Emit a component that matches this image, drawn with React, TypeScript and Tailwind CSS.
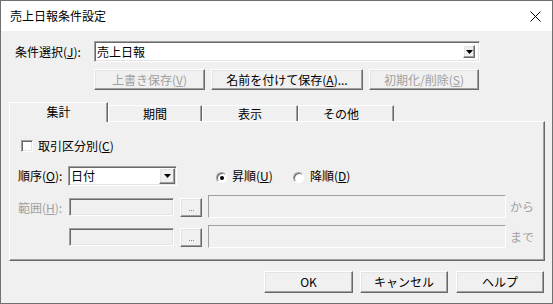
import React from 'react';

// classic win32 3D edges
const raised =
  'border border-t-white border-l-white border-r-[#696969] border-b-[#696969] shadow-[inset_-1px_-1px_0_#a0a0a0,inset_1px_1px_0_#e3e3e3] bg-[#f0f0f0]';
const sunken =
  'border border-t-[#a0a0a0] border-l-[#a0a0a0] border-r-white border-b-white shadow-[inset_1px_1px_0_#696969,inset_-1px_-1px_0_#e3e3e3]';

const Arrow = () => (
  <svg width="7" height="4" viewBox="0 0 7 4">
    <path d="M0 0h7L3.5 4z" fill="#000" />
  </svg>
);

interface BtnProps {
  className: string;
  disabled?: boolean;
  children: React.ReactNode;
}

const Btn: React.FC<BtnProps> = ({ className, disabled, children }) => (
  <div
    className={`${raised} ${className} flex items-center justify-center shrink-0 ${
      disabled ? 'text-[#a0a0a0]' : 'text-black'
    }`}
  >
    {children}
  </div>
);

const Radio = ({ checked }: { checked?: boolean }) => (
  <div className="w-[11px] h-[11px] rounded-full border border-t-[#a0a0a0] border-l-[#a0a0a0] border-r-white border-b-white bg-white shadow-[inset_1px_1px_0_#696969] flex items-center justify-center shrink-0">
    {checked && <div className="w-[4px] h-[4px] rounded-full bg-black" />}
  </div>
);

const DotsBtn = () => (
  <Btn className="w-[22px] h-[19px] mt-[4px] ml-[6px]">
    <div className="flex gap-[1px] mt-[5px]">
      <div className="w-[1px] h-[1px] bg-[#8a8a8a]" />
      <div className="w-[1px] h-[1px] bg-[#8a8a8a]" />
      <div className="w-[1px] h-[1px] bg-[#8a8a8a]" />
    </div>
  </Btn>
);

export default function App() {
  return (
    <div className="w-[553px] h-[304px] border border-[#707070] bg-[#f0f0f0] flex flex-col text-[12px] leading-[14px] text-black font-['Noto_Sans_CJK_JP','Noto_Sans',sans-serif] overflow-hidden">
      {/* Title bar */}
      <div className="h-[30px] bg-white flex items-center justify-between pl-[9px] pr-[11px] shrink-0">
        <span>売上日報条件設定</span>
        <svg width="11" height="11" viewBox="0 0 11 11">
          <path d="M0.5 0.5l10 10M10.5 0.5l-10 10" stroke="#000" strokeWidth="1" />
        </svg>
      </div>

      {/* 条件選択 */}
      <div className="flex items-center h-[21px] mt-[10px] shrink-0">
        <span className="w-[93px] pl-[14px] shrink-0">
          条件選択(<u>J</u>):
        </span>
        <div className={`${sunken} w-[386px] h-full bg-white flex items-center justify-between`}>
          <span className="pl-[2px]">売上日報</span>
          <div className={`${raised} w-[12px] h-[13px] mr-[4px] flex items-center justify-center`}>
            <Arrow />
          </div>
        </div>
      </div>

      {/* Save buttons */}
      <div className="flex h-[21px] mt-[7px] ml-[93px] shrink-0">
        <Btn className="w-[111px] h-full" disabled>
          上書き保存(<u>V</u>)
        </Btn>
        <Btn className="w-[152px] h-full ml-[6px]">
          名前を付けて保存(<u>A</u>)...
        </Btn>
        <Btn className="w-[110px] h-full ml-[6px]" disabled>
          初期化/削除(<u>S</u>)
        </Btn>
      </div>

      {/* Tabs */}
      <div className="flex items-end h-[19px] mt-[12px] ml-[8px] shrink-0">
        <div className="relative z-10 -mb-px w-[99px] h-[20px] bg-[#f0f0f0] border-t border-l border-r border-t-white border-l-white border-r-[#696969] shadow-[inset_-1px_0_0_#a0a0a0] flex items-center justify-center pb-[2px]">
          集計
        </div>
        <div className="w-[94px] h-[16px] border-t border-l border-r border-t-white border-l-white border-r-[#696969] shadow-[inset_-1px_0_0_#a0a0a0] flex items-center justify-center">
          期間
        </div>
        <div className="w-[96px] h-[16px] border-t border-l border-r border-t-white border-l-white border-r-[#696969] shadow-[inset_-1px_0_0_#a0a0a0] flex items-center justify-center">
          表示
        </div>
        <div className="w-[96px] h-[16px] border-t border-l border-r border-t-white border-l-white border-r-[#696969] shadow-[inset_-1px_0_0_#a0a0a0] flex items-center pl-[24px]">
          その他
        </div>
      </div>

      {/* Tab panel */}
      <div className="ml-[8px] w-[536px] h-[140px] border border-t-white border-l-white border-r-[#696969] border-b-[#696969] shadow-[inset_-1px_-1px_0_#a0a0a0] flex flex-col shrink-0">
        {/* 取引区分別 */}
        <div className="flex items-center h-[12px] mt-[18px] pl-[11px]">
          <div className={`${sunken} w-[12px] h-[12px] bg-white shrink-0`} />
          <span className="ml-[5px]">
            取引区分別(<u>C</u>)
          </span>
        </div>

        {/* 順序 */}
        <div className="flex items-center h-[20px] mt-[14px] pl-[8px]">
          <span className="w-[50px] shrink-0">
            順序(<u>O</u>):
          </span>
          <div className={`${sunken} w-[109px] h-full bg-white flex items-center justify-between p-[1px]`}>
            <span className="pl-[1px]">日付</span>
            <div className={`${raised} w-[16px] h-[16px] flex items-center justify-center`}>
              <Arrow />
            </div>
          </div>
          <div className="ml-[39px] mt-[3px]">
            <Radio checked />
          </div>
          <span className="ml-[5px] w-[61px]">
            昇順(<u>U</u>)
          </span>
          <div className="mt-[3px]">
            <Radio />
          </div>
          <span className="ml-[6px]">
            降順(<u>D</u>)
          </span>
        </div>

        {/* 範囲 from */}
        <div className="flex items-start h-[24px] mt-[8px] pl-[8px]">
          <span className="w-[51px] h-[23px] mt-[2px] flex items-center text-[#a0a0a0] shrink-0">
            範囲(<u>H</u>):
          </span>
          <div className={`${sunken} w-[105px] h-[18px] mt-[4px] bg-[#f0f0f0] shrink-0`} />
          <DotsBtn />
          <div className="w-[298px] h-[23px] mt-[1px] ml-[6px] border border-t-[#a0a0a0] border-l-[#a0a0a0] border-r-white border-b-white shrink-0" />
          <span className="h-[23px] mt-[1px] ml-[4px] flex items-center text-[#a0a0a0]">から</span>
        </div>

        {/* 範囲 to */}
        <div className="flex items-start h-[24px] mt-[6px] pl-[8px]">
          <span className="w-[51px] shrink-0" />
          <div className={`${sunken} w-[105px] h-[18px] mt-[4px] bg-[#f0f0f0] shrink-0`} />
          <DotsBtn />
          <div className="w-[298px] h-[23px] mt-[1px] ml-[6px] border border-t-[#a0a0a0] border-l-[#a0a0a0] border-r-white border-b-white shrink-0" />
          <span className="h-[23px] mt-[1px] ml-[4px] flex items-center text-[#a0a0a0]">まで</span>
        </div>
      </div>

      {/* Footer */}
      <div className="flex h-[22px] mt-[10px] ml-[263px] shrink-0">
        <Btn className="w-[89px] h-full">OK</Btn>
        <Btn className="w-[88px] h-full ml-[7px]">キャンセル</Btn>
        <Btn className="w-[88px] h-full ml-[8px]">ヘルプ</Btn>
      </div>
    </div>
  );
}
